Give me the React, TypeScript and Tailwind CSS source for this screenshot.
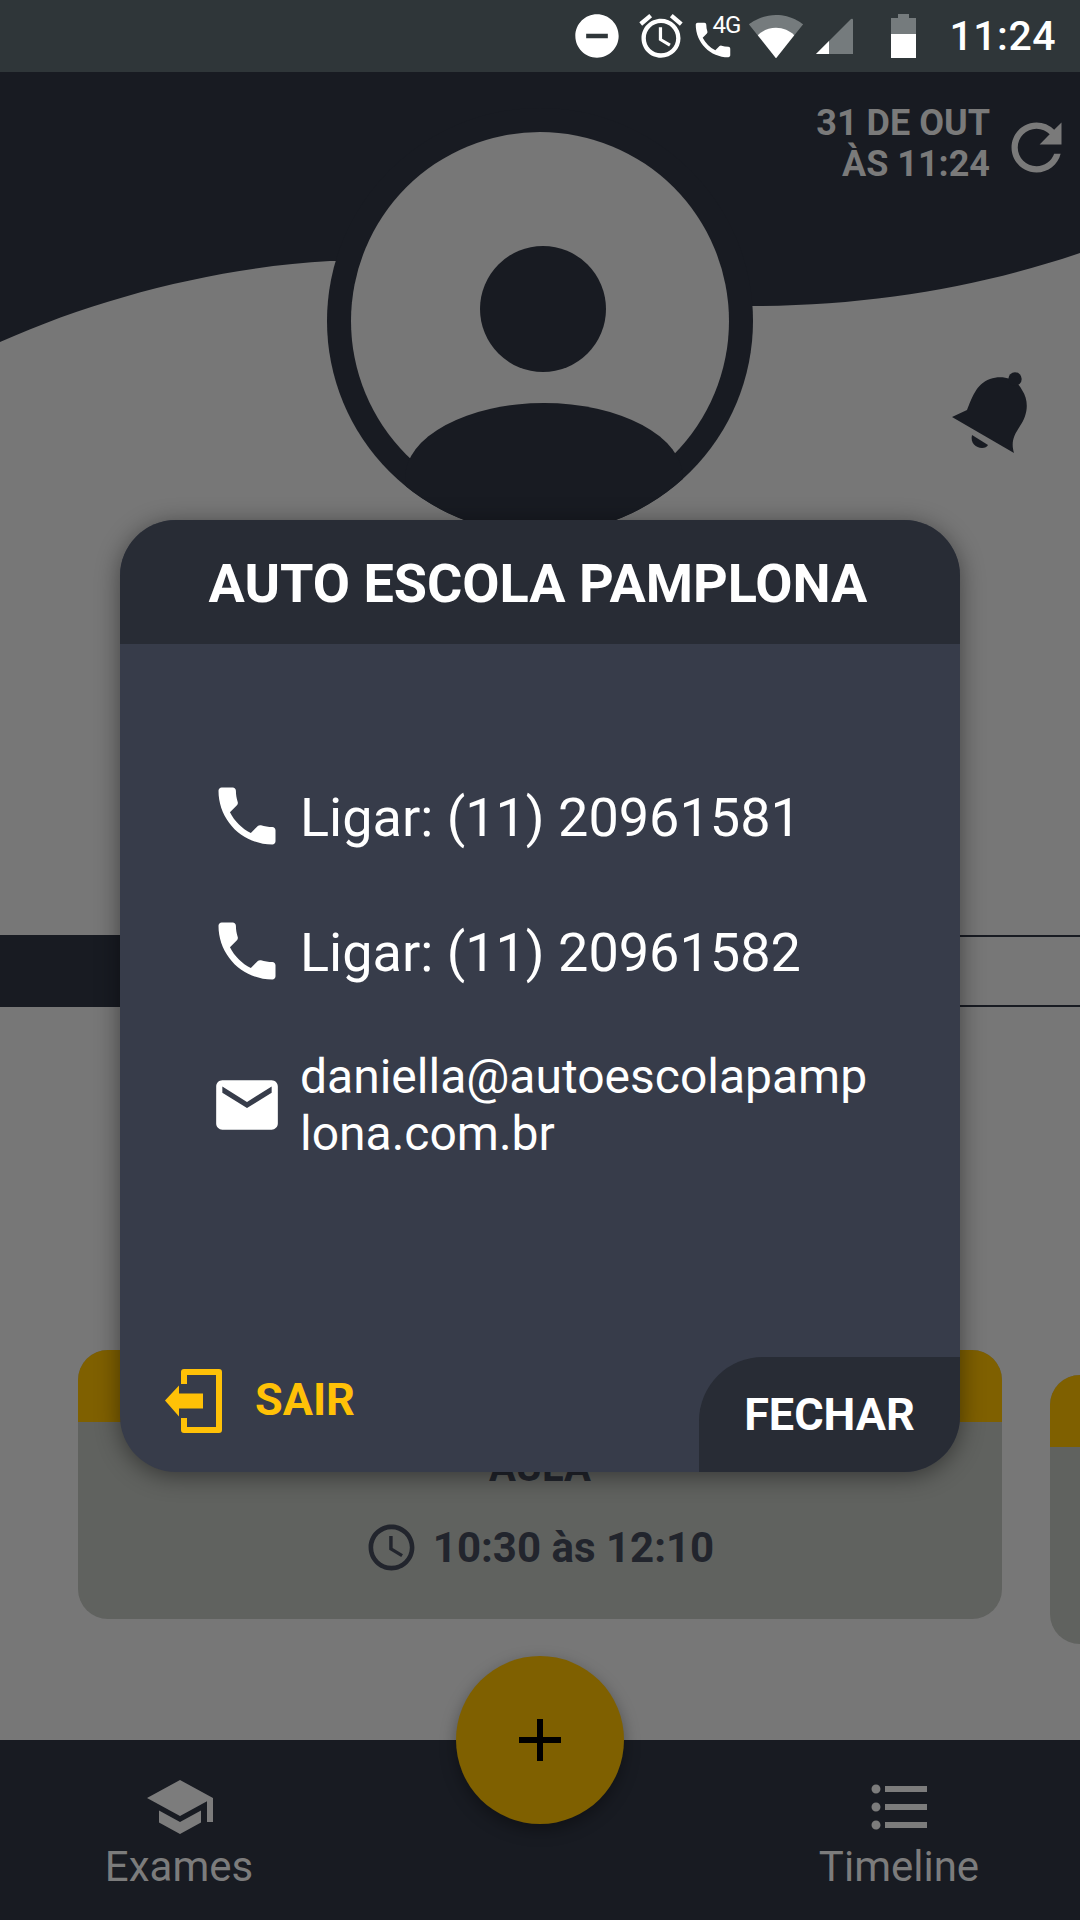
import {
  MdAccessTime,
  MdAdd,
  MdAlarm,
  MdDoNotDisturbOn,
  MdEmail,
  MdFormatListBulleted,
  MdPhone,
  MdRefresh,
  MdSchool,
} from "react-icons/md";

const StatusBar = () => (
  <div className="flex h-[72px] shrink-0 items-center justify-end bg-[#2f3639] pr-[24px] text-white">
    <MdDoNotDisturbOn className="h-[52px] w-[52px]" />
    <MdAlarm className="ml-[12px] h-[52px] w-[52px]" />
    <div className="relative ml-[7px] h-[50px] w-[50px]">
      <MdPhone className="absolute left-[-4px] top-[6px] h-[46px] w-[46px]" />
      <span className="absolute left-[18px] top-[0px] text-[24px] leading-[28px] tracking-[-1px]">4G</span>
    </div>
    <svg viewBox="0 0 24 24" className="ml-[4px] h-[56px] w-[56px]">
      <path fill="#757b7d" d="M12.01 21.49L23.64 7c-.45-.34-4.93-4-11.64-4C5.28 3 .81 6.66.36 7l11.65 14.49z" />
      <path fill="#fff" d="M12.01 21.49L4.2 11.7C6 9.8 9 8.5 12 8.5s6 1.3 7.8 3.2z" />
    </svg>
    <svg viewBox="0 0 37 36" className="ml-[12px] h-[36px] w-[37px]">
      <path fill="#757b7d" d="M0 36L35 1q2-1 2 1v34z" />
      <path fill="#fff" d="M0 36l13-13v13z" />
    </svg>
    <svg viewBox="0 0 25 44" className="ml-[38px] h-[44px] w-[25px]">
      <path fill="#757b7d" d="M7 0h11v4h7v16H0V4h7z" />
      <path fill="#fff" d="M0 20h25v24H0z" />
    </svg>
    <span className="ml-[33px] text-[41px] font-medium leading-none tracking-[0.5px]">11:24</span>
  </div>
);

const ContactRow = ({ number }: { number: string }) => (
  <div className="flex h-[76px] items-center">
    <MdPhone className="h-[76px] w-[76px]" />
    <span className="ml-[15px] mt-[3px] text-[54px] leading-none">Ligar: (11) {number}</span>
  </div>
);

const ExitIcon = () => (
  <svg viewBox="0 0 58 64" className="h-[64px] w-[58px]">
    <path d="M19 15V3h35v58H19V49" fill="none" stroke="#ffc107" strokeWidth="6" strokeLinejoin="round" />
    <path d="M0 31.500l14-15v8h24v15H14v8z" fill="#ffc107" />
  </svg>
);

const BellIcon = () => (
  <svg viewBox="0 0 160 140" className="absolute left-[900px] top-[268px] h-[140px] w-[160px]" fill="#181b22">
    <path d="M52 77L67 70C72 58 76 44 90 39C102 35 116 38 122 50C130 62 127 76 120 86C116 93 110 100 114 113Z" />
    <circle cx="115" cy="39" r="6.700" />
    <path d="M72 95C70 103 76 108 82 108C85 108 87 107 88 105Z" />
  </svg>
);

const Modal = () => (
  <div className="absolute left-[120px] top-[520px] flex h-[952px] w-[840px] flex-col overflow-hidden rounded-[56px] bg-[#373c4a] text-white shadow-[0_4px_24px_rgba(0,0,0,0.45)]">
    <div className="flex h-[124px] shrink-0 items-center justify-center bg-[#282c35] pr-[4px] pt-[2px] text-[54px] font-bold">
      AUTO ESCOLA PAMPLONA
    </div>
    <div className="flex flex-col gap-[59px] pl-[89px] pt-[134px]">
      <ContactRow number="20961581" />
      <ContactRow number="20961582" />
      <div className="flex items-center">
        <MdEmail className="ml-[1px] h-[74px] w-[74px] shrink-0" />
        <span className="ml-[16px] w-[572px] break-all text-[48px] leading-[57px]">
          daniella@autoescolapamplona.com.br
        </span>
      </div>
    </div>
    <div className="mt-auto flex h-[115px] justify-between">
      <div className="flex items-start pl-[45px] pt-[12px]">
        <ExitIcon />
        <span className="ml-[32px] mt-[5px] text-[45px] font-bold leading-[52px] text-[#ffc107]">SAIR</span>
      </div>
      <div className="flex w-[261px] items-center justify-center rounded-tl-[64px] bg-[#282c35] text-[45px] font-bold">
        FECHAR
      </div>
    </div>
  </div>
);

const NavItem = ({ icon, label }: { icon: React.ReactNode; label: string }) => (
  <div className="flex w-[360px] flex-col items-center pt-[31px] text-[#7c7c7c]">
    {icon}
    <span className="mr-[2px] mt-[-1px] text-[42px] leading-[50px]">{label}</span>
  </div>
);

export default function App() {
  return (
    <div className="relative flex h-[1920px] w-[1080px] flex-col overflow-hidden bg-[#777777] font-['Roboto',sans-serif]">
      <StatusBar />

      <div className="flex min-h-0 flex-1 flex-col">
        <div className="relative h-[863px] shrink-0">
          <svg viewBox="0 0 1080 863" className="absolute inset-0 h-[863px] w-[1080px]">
            <path
              fill="#181b22"
              d="M0 0H1080V181C980 215 870 234 752 234C600 234 480 188 330 189C220 195 100 225 0 270Z"
            />
          </svg>

          <div className="absolute right-[6px] top-[31px] flex items-center text-[#7a7a7a]">
            <div className="text-right text-[36px] font-bold leading-[41px]">
              31 DE OUT
              <br />
              ÀS 11:24
            </div>
            <MdRefresh className="ml-[9px] mt-[6px] h-[75px] w-[75px]" />
          </div>

          <svg viewBox="0 0 426 426" className="relative ml-[327px] mt-[36px] h-[426px] w-[426px]">
            <defs>
              <clipPath id="avatarClip">
                <circle cx="213" cy="213" r="213" />
              </clipPath>
            </defs>
            <circle cx="213" cy="213" r="213" fill="#181b22" />
            <circle cx="213" cy="213" r="189" fill="#777777" />
            <circle cx="216" cy="201" r="63" fill="#181b22" />
            <ellipse cx="217" cy="370" rx="139" ry="75" fill="#181b22" clipPath="url(#avatarClip)" />
          </svg>

          <BellIcon />
        </div>

        <div className="flex h-[72px] shrink-0">
          <div className="w-[300px] bg-[#181b22]" />
          <div className="flex-1 border-y-[2px] border-[#181b22]" />
        </div>

        <div className="mt-[343px] flex gap-[48px] pl-[78px]">
          <div className="h-[269px] w-[924px] shrink-0 overflow-hidden rounded-[30px] bg-[#60625f]">
            <div className="h-[72px] bg-[#7f6000]" />
            <div className="mt-[25px] text-center text-[40px] font-bold leading-[42px] text-[#22252d]">AULA</div>
            <div className="mt-[31px] flex items-center justify-center pl-[2px] text-[#22252d]">
              <MdAccessTime className="ml-[-4px] h-[55px] w-[55px]" />
              <span className="ml-[14px] text-[42px] font-bold leading-none">10:30 às 12:10</span>
            </div>
          </div>
          <div className="mt-[25px] h-[269px] w-[924px] shrink-0 overflow-hidden rounded-[30px] bg-[#60625f]">
            <div className="h-[72px] bg-[#7f6000]" />
          </div>
        </div>
      </div>

      <div className="flex h-[180px] shrink-0 justify-between bg-[#181b22]">
        <NavItem icon={<MdSchool className="h-[72px] w-[72px]" />} label="Exames" />
        <NavItem icon={<MdFormatListBulleted className="h-[72px] w-[72px]" />} label="Timeline" />
      </div>

      <button className="absolute left-[456px] top-[1656px] flex h-[168px] w-[168px] items-center justify-center rounded-full bg-[#7f6000] shadow-[0_6px_16px_rgba(0,0,0,0.35)]">
        <MdAdd className="h-[72px] w-[72px] text-black" />
      </button>

      <Modal />
    </div>
  );
}
